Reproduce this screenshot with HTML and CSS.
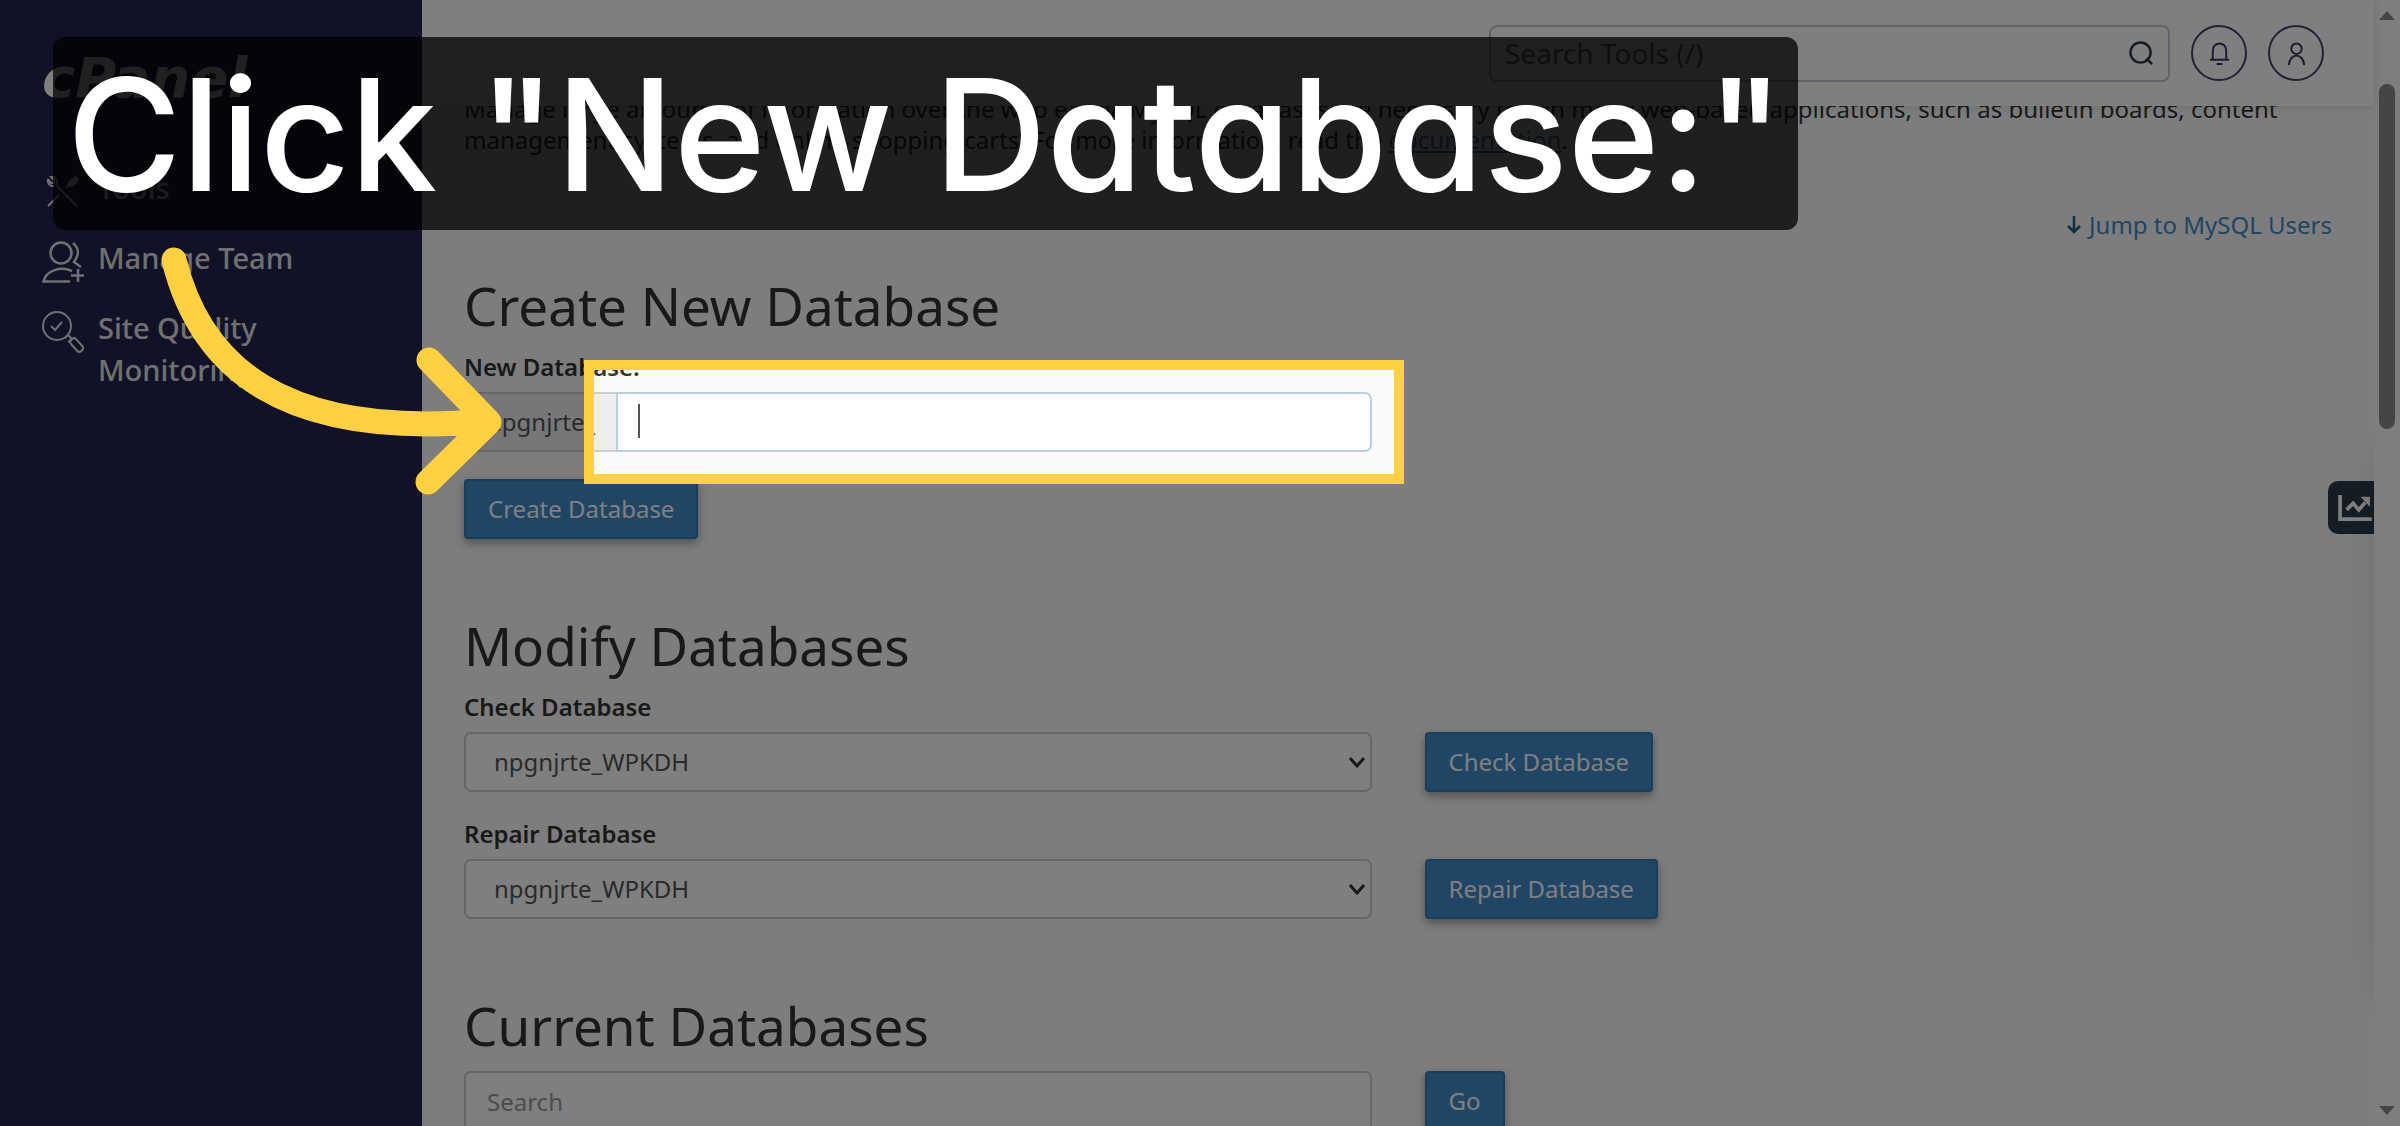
FILE: index.html
```html
<!DOCTYPE html>
<html lang="en">
<head>
    <meta charset="UTF-8">
    <meta name="viewport" content="width=device-width, initial-scale=1.0">
    <title>cPanel - MySQL Databases</title>
    <link rel="stylesheet" href="styles.css">
</head>
<body>

    <div class="app">
        <aside class="sidebar">
            <div class="logo">cPanel</div>
            <nav class="nav">
                <a class="nav-item" href="#">
                    <svg class="nav-icon" viewBox="0 0 42 42" fill="none" stroke="currentColor" stroke-width="2">
                        <path d="M15 15L35 35M6 35L17 24M24 17L29 12M6 8L9 12H12V9L9 6C13 5 16 9 15 14M6 8C5 13 9 16 13 15"/>
                        <path d="M28 10L34 6L36 8L32 14L28 15L26 13Z" fill="currentColor"/>
                    </svg>
                    <span>Tools</span>
                </a>
                <a class="nav-item" href="#">
                    <svg class="nav-icon" viewBox="0 0 42 42" fill="none" stroke="currentColor" stroke-width="2.5">
                        <circle cx="19" cy="12" r="10.5"/>
                        <path d="M31 2C38 8 37 14 32 21L39 26M30 30C19 25 4 29 1.500 40.500H28M36 28V41M29 34.500H42"/>
                    </svg>
                    <span>Manage Team</span>
                </a>
                <a class="nav-item" href="#">
                    <svg class="nav-icon" viewBox="0 0 42 42" fill="none" stroke="currentColor" stroke-width="2">
                        <circle cx="15" cy="15" r="14"/>
                        <path d="M9 15L13 19L20 11M23 27L26 24L30 28M26 31L30 28"/>
                        <rect x="-3" y="-7" width="7" height="15" rx="3" transform="translate(34 34) rotate(-42)"/>
                    </svg>
                    <span>Site Quality Monitoring</span>
                </a>
            </nav>
        </aside>

        <div class="page">
            <header class="topbar">
                <div class="tool-search">
                    <input type="text" placeholder="Search Tools (/)" aria-label="Search Tools">
                    <svg viewBox="0 0 26 26" fill="none" stroke="currentColor" stroke-width="2.5">
                        <circle cx="12" cy="12" r="10.500"/>
                        <path d="M18 18L24 24"/>
                    </svg>
                </div>
                <button class="round-btn" type="button" aria-label="Notifications">
                    <svg viewBox="0 0 24 24" fill="none" stroke="currentColor" stroke-width="2">
                        <path d="M5 18V9C5 -1 19 -1 19 9V18M2 18.500H22M9 23H15"/>
                    </svg>
                </button>
                <button class="round-btn" type="button" aria-label="Account">
                    <svg viewBox="0 0 24 24" fill="none" stroke="currentColor" stroke-width="2">
                        <circle cx="12" cy="7" r="5.500"/>
                        <path d="M4 24C5 11 19 11 20 24"/>
                    </svg>
                </button>
            </header>

            <main class="content">
                <p class="intro">Manage large amounts of information over the web easily. MySQL databases are necessary to run many web-based applications, such as bulletin boards, content management systems, and online shopping carts. For more information, read the <a href="#">documentation</a>.</p>
                <a class="jump" href="#users">
                    <svg viewBox="0 0 14 18" fill="none" stroke="currentColor" stroke-width="2.5">
                        <path d="M7 0V16M1 10L7 16L13 10"/>
                    </svg>
                    Jump to MySQL Users
                </a>

                <section class="section">
                    <h2>Create New Database</h2>
                    <label for="newdb">New Database:</label>
                    <div class="row">
                        <div class="input-group">
                            <span class="prefix">npgnjrte_</span>
                            <div class="target">
                                <input class="field" id="newdb" type="text">
                                <span class="caret"></span>
                                <div class="spotlight"></div>
                            </div>
                        </div>
                    </div>
                    <button class="btn create" type="button">Create Database</button>
                </section>

                <section class="section">
                    <h2>Modify Databases</h2>
                    <label for="checkdb">Check Database</label>
                    <div class="row">
                        <div class="select">
                            <select class="field" id="checkdb"><option>npgnjrte_WPKDH</option></select>
                            <svg viewBox="0 0 16 11" fill="none" stroke="currentColor" stroke-width="3"><path d="M1 1L8 9L15 1"/></svg>
                        </div>
                        <button class="btn" type="button">Check Database</button>
                    </div>
                    <label for="repairdb">Repair Database</label>
                    <div class="row">
                        <div class="select">
                            <select class="field" id="repairdb"><option>npgnjrte_WPKDH</option></select>
                            <svg viewBox="0 0 16 11" fill="none" stroke="currentColor" stroke-width="3"><path d="M1 1L8 9L15 1"/></svg>
                        </div>
                        <button class="btn" type="button">Repair Database</button>
                    </div>
                </section>

                <section class="section">
                    <h2>Current Databases</h2>
                    <div class="row">
                        <input class="field" type="text" placeholder="Search" aria-label="Search databases">
                        <button class="btn" type="button">Go</button>
                    </div>
                </section>
            </main>
        </div>

        <div class="scrollbar">
            <svg viewBox="0 0 16 9" fill="currentColor"><path d="M0 9L8 0L16 9Z"/></svg>
            <div class="track"><div class="thumb"></div></div>
            <svg viewBox="0 0 16 9" fill="currentColor"><path d="M0 0L8 9L16 0Z"/></svg>
        </div>
    </div>

    <!-- stats drawer, closed -->
    <div class="drawer">
        <button class="drawer-tab" type="button" aria-label="Statistics">
            <svg viewBox="0 0 36 30" fill="none" stroke="currentColor" stroke-width="4">
                <path d="M2 1V27H36"/>
                <path d="M9 17L16 10L22 17L29 9"/>
                <path d="M24 3H34V14Z" fill="currentColor" stroke="none"/>
            </svg>
        </button>
    </div>

    <!-- tutorial step -->
    <div class="step-title">Click "New Database:"</div>
    <svg class="step-arrow" viewBox="0 0 520 510" fill="none" stroke="currentColor" stroke-width="25" stroke-linecap="round" stroke-linejoin="round">
        <path d="M174 260C200 365 280 440 488 421M429 360L489 422L428 482"/>
    </svg>

</body>
</html>
```
FILE: styles.css
```css
* {
    box-sizing: border-box;
}
body {
    margin: 0;
    height: 100vh;
    overflow: hidden;
    position: relative;
    font-family: "Noto Sans", "Open Sans", sans-serif;
    font-size: 24px;
    line-height: 32px;
    color: #333;
    background-color: #fafafa;
}
input, select, button {
    font: inherit;
}
.app {
    display: flex;
    height: 100%;
}

/* sidebar */
.sidebar {
    flex: 0 0 422px;
    padding: 48px 42px;
    background-color: #222450;
    color: #e0e0e0;
}
.logo {
    font-family: "DejaVu Sans", sans-serif;
    font-size: 56px;
    font-style: italic;
    font-weight: 700;
    line-height: 60px;
    color: #fff;
}
.nav {
    display: flex;
    flex-direction: column;
    gap: 28px;
    margin-top: 59px;
}
.nav-item {
    display: flex;
    gap: 14px;
    font-size: 29px;
    font-weight: 500;
    line-height: 42px;
    color: inherit;
    text-decoration: none;
}
.nav-icon {
    flex: none;
    width: 42px;
    height: 42px;
    margin: 4px 0 -4px;
}

/* top bar */
.page {
    flex: 1;
    min-width: 0;
}
.topbar {
    position: relative;
    z-index: 2;
    display: flex;
    justify-content: flex-end;
    align-items: center;
    gap: 21px;
    height: 106px;
    padding: 0 50px;
    background-color: #fff;
    box-shadow: 0 2px 8px rgba(0, 0, 0, 0.1);
}
.tool-search {
    display: flex;
    align-items: center;
    width: 681px;
    height: 57px;
    padding: 0 14px;
    border: 2px solid #c5c5d4;
    border-radius: 8px;
    color: #293a4a;
}
.tool-search input {
    flex: 1;
    min-width: 0;
    padding: 0;
    border: none;
    background: none;
    font-size: 28px;
}
.tool-search input::placeholder {
    color: #757575;
}
.tool-search svg {
    width: 25px;
    height: 25px;
}
.round-btn {
    display: flex;
    justify-content: center;
    align-items: center;
    width: 56px;
    height: 56px;
    padding: 0;
    border: 2px solid #42446e;
    border-radius: 50%;
    background: none;
    color: #32355f;
}
.round-btn svg {
    width: 23px;
    height: 23px;
}

/* content, scrolled a little under the top bar */
.content {
    display: flex;
    flex-direction: column;
    margin-top: -13px;
    padding: 0 42px;
}
.intro {
    margin: 0;
    line-height: 31px;
}
.intro a {
    color: #428bca;
}
.jump {
    align-self: flex-end;
    display: flex;
    align-items: center;
    gap: 8px;
    margin: 54px 0 36px;
    color: #428bca;
    text-decoration: none;
}
.jump svg {
    width: 14px;
    height: 18px;
    color: #21607a;
}
.section {
    margin-bottom: 78px;
}
h2 {
    margin: 0 0 16px;
    font-size: 53px;
    font-weight: 400;
    line-height: 58px;
}
label {
    display: block;
    margin-bottom: 9px;
    font-weight: 600;
}
.row {
    display: grid;
    grid-template-columns: 1fr 1fr;
    gap: 53px;
    align-items: center;
    justify-items: start;
}
.row + label {
    margin-top: 26px;
}
.field {
    display: block;
    width: 100%;
    height: 60px;
    padding: 0 21px;
    border: 2px solid #ccc;
    border-radius: 7px;
    background-color: #fff;
    color: #555;
}
.field::placeholder {
    color: #999;
}
.input-group {
    display: flex;
    width: 100%;
}
.prefix {
    padding: 12px 21px;
    border: 2px solid #ccc;
    border-right: none;
    border-radius: 7px 0 0 7px;
    background-color: #eee;
    color: #555;
}
.target {
    position: relative;
    flex: 1;
}
.target .field {
    border-color: #b8cde0;
    border-radius: 0 7px 7px 0;
}
.caret {
    position: absolute;
    top: 12px;
    left: 22px;
    width: 2px;
    height: 34px;
    background-color: #555;
}
/* everything outside the frame is dimmed */
.spotlight {
    position: absolute;
    z-index: 10;
    inset: -32px;
    border: 10px solid #ffd142;
    box-shadow: 0 0 0 3000px rgba(0, 0, 0, 0.5);
    pointer-events: none;
}
.select {
    position: relative;
    width: 100%;
}
.select .field {
    appearance: none;
    padding-left: 28px;
}
.select svg {
    position: absolute;
    top: 25px;
    right: 7px;
    width: 16px;
    height: 11px;
}
.btn {
    height: 60px;
    padding: 0 22px;
    border: 2px solid #357ebd;
    border-radius: 4px;
    background-color: #428bca;
    color: #fff;
    box-shadow: 0 4px 10px rgba(0, 0, 0, 0.35);
}
.create {
    margin-top: 27px;
}

/* scrollbar */
.scrollbar {
    display: flex;
    flex-direction: column;
    align-items: center;
    flex: 0 0 26px;
    padding: 11px 0;
    background-color: #fcfcfc;
    color: #8b8b8b;
}
.scrollbar svg {
    width: 16px;
    height: 9px;
}
.track {
    flex: 1;
    padding-top: 64px;
}
.thumb {
    width: 16px;
    height: 345px;
    border-radius: 8px;
    background-color: #8b8b8b;
}

/* drawer */
.drawer {
    position: absolute;
    top: 400px;
    right: 26px;
    width: 46px;
    height: 650px;
    padding-top: 81px;
    overflow: hidden;
}
.drawer::after {
    content: "";
    position: absolute;
    top: 60px;
    left: 100%;
    width: 40px;
    height: 530px;
    box-shadow: 0 0 36px rgba(0, 0, 0, 0.1);
}
.drawer-tab {
    display: block;
    width: 46px;
    height: 53px;
    padding: 0 0 0 9px;
    border: none;
    border-radius: 10px 0 0 10px;
    background-color: #293a4a;
    color: #fff;
}
.drawer-tab svg {
    display: block;
    width: 36px;
    height: 28px;
}

/* tutorial step */
.step-title {
    position: absolute;
    z-index: 20;
    top: 37px;
    left: 53px;
    padding: 3px 14px 0;
    border-radius: 12px;
    background-color: rgba(0, 0, 0, 0.75);
    color: #fff;
    font-family: Inter, sans-serif;
    font-size: 156px;
    font-weight: 500;
    font-feature-settings: "cv11";
    line-height: 190px;
    white-space: nowrap;
}
.step-arrow {
    position: absolute;
    z-index: 21;
    top: 0;
    left: 0;
    width: 520px;
    height: 510px;
    color: #ffd142;
}
```
